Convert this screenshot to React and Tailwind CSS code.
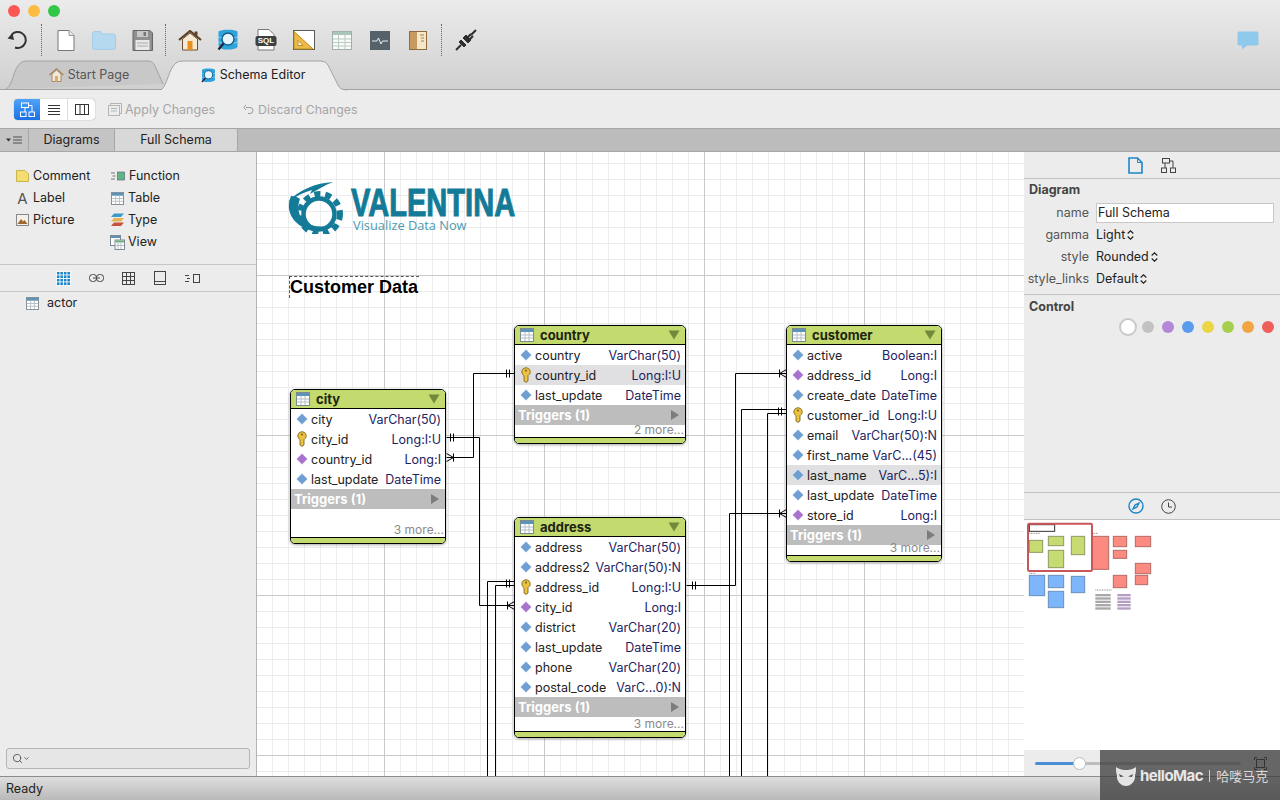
import { Search, ChevronDown } from 'lucide-react';

const nodes = [
  {
    name: 'city',
    pos: 'left-[33px] top-[237px] w-[156px]',
    moreH: 'h-[28px]',
    more: '3 more...',
    rows: [
      ['city', 'VarChar(50)', 'd'],
      ['city_id', 'Long:I:U', 'k'],
      ['country_id', 'Long:I', 'p'],
      ['last_update', 'DateTime', 'd'],
    ],
  },
  {
    name: 'country',
    pos: 'left-[257px] top-[173px] w-[172px]',
    moreH: 'h-[12px]',
    more: '2 more...',
    rows: [
      ['country', 'VarChar(50)', 'd'],
      ['country_id', 'Long:I:U', 'k', true],
      ['last_update', 'DateTime', 'd'],
    ],
  },
  {
    name: 'address',
    pos: 'left-[257px] top-[365px] w-[172px]',
    moreH: 'h-[14px]',
    more: '3 more...',
    rows: [
      ['address', 'VarChar(50)', 'd'],
      ['address2', 'VarChar(50):N', 'd'],
      ['address_id', 'Long:I:U', 'k'],
      ['city_id', 'Long:I', 'p'],
      ['district', 'VarChar(20)', 'd'],
      ['last_update', 'DateTime', 'd'],
      ['phone', 'VarChar(20)', 'd'],
      ['postal_code', 'VarC...0):N', 'd'],
    ],
  },
  {
    name: 'customer',
    pos: 'left-[529px] top-[173px] w-[156px]',
    moreH: 'h-[10px]',
    more: '3 more...',
    rows: [
      ['active', 'Boolean:I', 'd'],
      ['address_id', 'Long:I', 'p'],
      ['create_date', 'DateTime', 'd'],
      ['customer_id', 'Long:I:U', 'k'],
      ['email', 'VarChar(50):N', 'd'],
      ['first_name', 'VarC...(45)', 'd'],
      ['last_name', 'VarC...5):I', 'd', true],
      ['last_update', 'DateTime', 'd'],
      ['store_id', 'Long:I', 'p'],
    ],
  },
];

function TableIcon({ size = 14, head = '#5f93b5' }) {
  return (
    <svg width={size} height={size} viewBox="0 0 14 14" className="shrink-0">
      <rect x="0.5" y="0.5" width="13" height="13" fill="#fff" stroke="#7c8a94" />
      <rect x="1" y="1" width="12" height="3" fill={head} />
      <path d="M5 4v9M9 4v9M1 7h12M1 10h12" stroke="#b4bec6" strokeWidth="1" />
    </svg>
  );
}

function Diamond({ color }) {
  return (
    <svg width="12" height="12" viewBox="0 0 12 12" className="shrink-0">
      <path d="M6 0.5 11.500 6 6 11.500 0.5 6Z" fill={color} stroke="#fff" strokeOpacity="0.5" strokeWidth="0.5" />
    </svg>
  );
}

function KeyIcon() {
  return (
    <svg width="10" height="16" viewBox="0 0 10 16" className="shrink-0">
      <path d="M5 0.7a4.2 4.2 0 0 1 2 7.9V14l-2 1.4L3 14V8.6A4.2 4.2 0 0 1 5 0.7Z" fill="#eec23f" stroke="#7b6a28" strokeWidth="0.9" />
      <circle cx="5" cy="3.6" r="1.1" fill="#7b6a28" />
    </svg>
  );
}

function TableNode({ node }) {
  return (
    <div className={`absolute ${node.pos} bg-white border border-black rounded-[5px] overflow-hidden shadow-[0_1px_3px_rgba(0,0,0,0.35)]`}>
      <div className="h-[19px] bg-[#c3da6e] border-b border-black flex items-center pl-[5px] pr-[5px]">
        <TableIcon />
        <span className="ml-[6px] pt-[1px] font-bold text-[13px] text-[#1e2410]">{node.name}</span>
        <svg width="12" height="10" viewBox="0 0 12 10" className="ml-auto">
          <path d="M0.5 0.5h11L6 9.5Z" fill="#73893a" />
        </svg>
      </div>
      {node.rows.map((r) => (
        <div key={r[0]} className={`h-5 flex items-center pr-[4px] text-[12.5px] ${r[3] ? 'bg-[#e0e0e2]' : ''}`}>
          <span className="w-[20px] flex justify-center pl-[1px] shrink-0">
            {r[2] === 'k' ? <KeyIcon /> : <Diamond color={r[2] === 'p' ? '#a873cc' : '#6d9fd2'} />}
          </span>
          <span className="text-[#222] pt-[2px]">{r[0]}</span>
          <span className="ml-auto pt-[2px] text-[#23235f] whitespace-nowrap">{r[1]}</span>
        </div>
      ))}
      <div className="h-5 bg-[#bdbdbd] flex items-center px-[3px] pr-[6px]">
        <span className="text-white font-bold text-[13px] pt-[1px]">Triggers (1)</span>
        <svg width="8" height="10" viewBox="0 0 8 10" className="ml-auto">
          <path d="M0 0l8 5-8 5Z" fill="#7d7d7d" />
        </svg>
      </div>
      <div className={`${node.moreH} flex items-end justify-end pr-[1px] text-[12px] leading-[14px] text-[#8a8a8a]`}>{node.more}</div>
      <div className="h-[5px] bg-[#c3da6e] border-t border-black box-content"></div>
    </div>
  );
}

function Ticks({ x, y }) {
  return <path d={`M${x} ${y - 4}v8M${x + 3} ${y - 4}v8`} />;
}

function Crow({ x, y, dir }) {
  // dir 1: table on right, -1: table on left
  return <path d={`M${x} ${y - 4}v8M${x} ${y}L${x + 7 * dir} ${y - 4}M${x} ${y}L${x + 7 * dir} ${y + 4}`} />;
}

function Links() {
  return (
    <svg className="absolute left-0 top-0" width="767" height="624" fill="none" stroke="#000" strokeWidth="1">
      <g transform="translate(-256.5 -151.5)">
        <path d="M514 373H473V457H446" />
        <path d="M446 437H479V605H514" />
        <path d="M514 581H487V776" />
        <path d="M514 585H495V776" />
        <path d="M686 585H735V373H786" />
        <path d="M786 409H741V776" />
        <path d="M786 413H767V776" />
        <path d="M786 513H729V776" />
        <Ticks x={506} y={373} />
        <Ticks x={450} y={437} />
        <Ticks x={506} y={583} />
        <Ticks x={692} y={585} />
        <Ticks x={778} y={411} />
        <Crow x={453} y={457} dir={-1} />
        <Crow x={507} y={605} dir={1} />
        <Crow x={779} y={373} dir={1} />
        <Crow x={779} y={513} dir={1} />
      </g>
    </svg>
  );
}

function Logo() {
  const teal = '#137b97';
  return (
    <div className="absolute left-[31px] top-[30px] w-[240px] h-[54px]">
      <svg className="absolute left-0 top-0" width="60" height="52" viewBox="0 0 60 52">
        <circle cx="32" cy="32" r="20" fill="none" stroke={teal} strokeWidth="6" strokeDasharray="6 5" />
        <circle cx="31" cy="32" r="15.500" fill="none" stroke={teal} strokeWidth="4.500" />
        <path d="M45 0C28 1 10 8 0 20 8 14 16 10 24 8L22 12 38 3C40 2 43 1 45 0Z" fill={teal} />
        <path d="M3 14C-3 28 3 44 28 50 14 42 7 30 12 17 10 15 6 14 3 14Z" fill={teal} />
        <path d="M14 40C24 50 38 50 50 42 38 46 24 45 14 40Z" fill={teal} />
      </svg>
      <div className="absolute left-[63px] top-[8px] origin-left scale-x-[0.765] font-['Liberation_Sans',sans-serif] font-bold text-[38px] leading-[26px] [-webkit-text-stroke:1px_#137b97] text-[#137b97] whitespace-nowrap">VALENTINA</div>
      <div className="absolute left-[65px] top-[35px] font-['Open_Sans',sans-serif] text-[12.8px] leading-[16px] text-[#4b9ab2] whitespace-nowrap">Visualize Data Now</div>
    </div>
  );
}

function Canvas() {
  return (
    <div className="relative flex-1 overflow-hidden bg-white bg-[linear-gradient(#c9c9c9_1px,transparent_1px),linear-gradient(90deg,#c9c9c9_1px,transparent_1px),linear-gradient(#ececec_1px,transparent_1px),linear-gradient(90deg,#ececec_1px,transparent_1px)] bg-[size:160px_160px,160px_160px,16px_16px,16px_16px] bg-[position:0_123px,127px_0,0_11px,15px_0]">
      <Logo />
      <div className="absolute left-[32px] top-[124px] w-[130px] h-[22px] border-t border-l border-dashed border-[#555] font-['Liberation_Sans',sans-serif] font-bold text-[18px] leading-[21px] text-black whitespace-nowrap">Customer Data</div>
      <Links />
      {nodes.map((n) => <TableNode key={n.name} node={n} />)}
    </div>
  );
}

function Dots() {
  return <div className="h-[32px] w-0 border-l border-dotted border-[#666] shrink-0"></div>;
}

function ToolBox({ children }) {
  return <div className="w-[38px] h-[38px] flex items-center justify-center shrink-0">{children}</div>;
}

function SchemaIcon({ size }) {
  return (
    <svg width={size} height={size} viewBox="0 0 22 22">
      <path d="M1.500 2.500C4 0 18 0 20.500 2.500V18C18 21 8 21 5 20L1.500 17Z" fill="#2ea3dd" />
      <path d="M1.500 8C6 10 16 10 20.500 8M1.500 13C6 15 16 15 20.500 13" fill="none" stroke="#a8dcf4" strokeWidth="0.800" />
      <circle cx="11" cy="10" r="6" fill="#e6f5fb" stroke="#145f88" strokeWidth="1.400" />
      <path d="M6.500 14.500 1.500 20.500" stroke="#223" strokeWidth="2.200" />
    </svg>
  );
}

function Toolbar() {
  return (
    <div className="h-[40px] flex items-center">
      <div className="w-9 flex justify-center">
        <svg width="22" height="22" viewBox="0 0 22 22" fill="none" stroke="#333" strokeWidth="2">
          <path d="M4.500 6A8 8 0 1 1 8 18.500" />
          <path d="M0.500 9.500 7 11 5.500 4Z" fill="#333" stroke="none" />
        </svg>
      </div>
      <div className="ml-[5px]"><Dots /></div>
      <div className="ml-[5px] flex">
        <ToolBox>
          <svg width="18" height="21" viewBox="0 0 18 21">
            <path d="M1 .5h11l5 5v15H1Z" fill="#fff" stroke="#777" />
            <path d="M12 .5v5h5" fill="#e8e8e8" stroke="#999" />
          </svg>
        </ToolBox>
        <ToolBox>
          <svg width="24" height="19" viewBox="0 0 24 19">
            <path d="M0.500 2.500a2 2 0 0 1 2-2h6l2 2.500h11a2 2 0 0 1 2 2v11.500a2 2 0 0 1-2 2h-19a2 2 0 0 1-2-2Z" fill="#b5d9ef" stroke="#a5cce6" />
          </svg>
        </ToolBox>
        <ToolBox>
          <svg width="21" height="21" viewBox="0 0 21 21">
            <path d="M1 .5h17l2.500 2.500v17.500h-19.500Z" fill="#8f8f8f" stroke="#666" />
            <rect x="5" y="1" width="11" height="6" fill="#c8c8c8" />
            <rect x="11.500" y="2" width="2.500" height="4" fill="#777" />
            <rect x="3.500" y="10" width="14" height="10" fill="#e8e8e8" />
            <path d="M5 13h11M5 16h11" stroke="#aaa" />
          </svg>
        </ToolBox>
      </div>
      <div className="ml-[4px]"><Dots /></div>
      <div className="ml-[5px] flex">
        <ToolBox>
          <svg width="24" height="21" viewBox="0 0 24 21">
            <path d="M4.500 9v11h15V9L12 3Z" fill="#f5ead6" stroke="#6b4f33" />
            <path d="M1 10 12 1l11 9" fill="none" stroke="#5c4128" strokeWidth="2.200" />
            <rect x="16.500" y="1.500" width="3" height="4" fill="#5c4128" />
            <rect x="9.500" y="11" width="5" height="9" fill="#e88f1e" />
          </svg>
        </ToolBox>
        <ToolBox>
          <SchemaIcon size={22} />
        </ToolBox>
        <ToolBox>
          <svg width="22" height="22" viewBox="0 0 22 22">
            <path d="M3 .5h11l5 5v15.500H3Z" fill="#fff" stroke="#777" />
            <rect x="0.500" y="7" width="21" height="10" rx="2" fill="#3f3f3f" />
          </svg>
          <span className="absolute text-[8px] font-bold leading-none text-white font-['Liberation_Sans',sans-serif] mt-[2px]">SQL</span>
        </ToolBox>
        <ToolBox>
          <svg width="22" height="20" viewBox="0 0 22 20">
            <rect x="0.500" y="0.500" width="21" height="19" fill="#fff" stroke="#5a5a5a" />
            <path d="M1 1.500V19h19Z" fill="#edbb45" stroke="#b98b24" />
            <path d="M5 10.500V15.500h5Z" fill="#fff" stroke="#b98b24" />
          </svg>
        </ToolBox>
        <ToolBox>
          <svg width="20" height="19" viewBox="0 0 20 19">
            <rect x="0.500" y="0.500" width="19" height="18" fill="#f8fbf8" stroke="#9fb1a8" />
            <rect x="1" y="1" width="18" height="3" fill="#a9c5bc" />
            <path d="M6.500 4v14M13 4v14M1 8h18M1 11.500h18M1 15h18" stroke="#b9cbc3" />
          </svg>
        </ToolBox>
        <ToolBox>
          <svg width="20" height="19" viewBox="0 0 20 19">
            <rect width="20" height="19" fill="#55626a" />
            <path d="M2 10h5l1.500-3 2.500 6 1.500-3h5.500" fill="none" stroke="#e8eef0" strokeWidth="1" />
          </svg>
        </ToolBox>
        <ToolBox>
          <svg width="18" height="19" viewBox="0 0 18 19">
            <rect x="0.500" y="0.500" width="17" height="18" fill="#f7e7c9" stroke="#8f6c3f" />
            <rect x="1" y="1" width="7" height="17" fill="#c79a63" />
            <path d="M11 4h4M12 7h3M12 10h3" stroke="#a4814f" />
          </svg>
        </ToolBox>
      </div>
      <div className="ml-[4px]"><Dots /></div>
      <div className="ml-[5px]">
        <ToolBox>
          <svg width="22" height="22" viewBox="0 0 22 22" fill="none" stroke="#2e2e2e">
            <path d="M1 21 6 16" strokeWidth="2" />
            <path d="M5 12 10 17 8 19 3 14Z" fill="#2e2e2e" transform="translate(1 -1)" />
            <path d="M8 9 13 14 16 11 11 6Z" fill="#2e2e2e" />
            <path d="M13 8 16 5M15 10 18 7M16 6 21 1" strokeWidth="2" />
          </svg>
        </ToolBox>
      </div>
      <div className="ml-auto mr-[21px]">
        <svg width="22" height="19" viewBox="0 0 22 19">
          <path d="M2 .500h18a1.500 1.500 0 0 1 1.500 1.500v11a1.500 1.500 0 0 1-1.500 1.500H10L5 18.500v-4H2A1.500 1.500 0 0 1 .5 13V2A1.500 1.500 0 0 1 2 .5Z" fill="#8fc9ec" />
        </svg>
      </div>
    </div>
  );
}

function Tabs() {
  return (
    <div className="relative h-[30px] flex border-b border-[#a3a3a3]">
      <div className="relative ml-[5px] w-[160px] h-[30px] flex items-center justify-center">
        <svg className="absolute left-0 top-0" width="160" height="30" viewBox="0 0 160 30">
          <path d="M1 29C8 26 8 8 16 2.500Q18 1 22 1H143Q148 1 150 6L158 24" fill="#c8c8c8" stroke="#a3a3a3" />
        </svg>
        <span className="relative flex items-center gap-[4px] text-[#555] text-[12.5px] ml-[8px]">
          <svg width="15" height="14" viewBox="0 0 15 14">
            <path d="M3 6v7.500h9V6L7.500 2Z" fill="#f3e9d8" stroke="#a58a6c" />
            <path d="M.5 7 7.500 1l7 6" fill="none" stroke="#a58a6c" strokeWidth="1.400" />
            <rect x="6" y="8" width="3" height="5.500" fill="#e3a766" />
          </svg>
          Start Page
        </span>
      </div>
      <div className="relative ml-[-4px] w-[186px] h-[31px] flex items-center justify-center z-10">
        <svg className="absolute left-0 top-0" width="186" height="31" viewBox="0 0 186 31">
          <path d="M0 30C6 26 8 8 15 3Q17 1 22 1H160Q165 1 167 5L176 23C178 28 180 29.500 186 30V31H0Z" fill="#ececec" />
          <path d="M0 30C6 26 8 8 15 3Q17 1 22 1H160Q165 1 167 5L176 23C178 28 180 29.500 186 30" fill="none" stroke="#a3a3a3" />
        </svg>
        <span className="relative flex items-center gap-[4px] text-[#222] text-[12.5px] mr-[2px]">
          <SchemaIcon size={15} />
          Schema Editor
        </span>
      </div>
    </div>
  );
}

function SubToolbar() {
  return (
    <div className="h-[38px] bg-[#ececec] flex items-center pl-[14px] text-[12.5px] text-[#a6a6a6]">
      <div className="flex h-[21px] w-[81px] rounded-[4px] bg-white shadow-[0_0_1px_rgba(0,0,0,0.5)] overflow-hidden">
        <div className="w-[26px] bg-[linear-gradient(#4ea4f8,#1b70e4)] flex items-center justify-center">
          <svg width="15" height="15" viewBox="0 0 15 15" fill="none" stroke="#fff">
            <rect x="1.500" y="1" width="7" height="4.500" />
            <rect x="0.500" y="10" width="5.500" height="4.500" />
            <rect x="9" y="10" width="5.500" height="4.500" />
            <path d="M5 5.500V10M8.500 3.500H12V10" />
          </svg>
        </div>
        <div className="w-[28px] border-r border-[#ddd] flex items-center justify-center">
          <svg width="14" height="11" viewBox="0 0 14 11" stroke="#333"><path d="M1 1.500h12M1 4.500h12M1 7.500h12M1 10.500h12" /></svg>
        </div>
        <div className="flex-1 flex items-center justify-center">
          <svg width="14" height="11" viewBox="0 0 14 11" fill="none" stroke="#333"><rect x="0.500" y="0.500" width="13" height="10" /><path d="M5 .5v10M9.500 .5v10" /></svg>
        </div>
      </div>
      <svg width="14" height="13" viewBox="0 0 14 13" fill="none" stroke="#b5b5b5" className="ml-[13px]">
        <rect x="2.500" y="0.500" width="11" height="10" />
        <rect x="0.500" y="2.500" width="11" height="10" fill="#ececec" />
        <path d="M3 5.500h6M3 8h6" />
      </svg>
      <span className="ml-[3px] pt-[2px]">Apply Changes</span>
      <svg width="11" height="11" viewBox="0 0 11 11" fill="none" stroke="#9a9a9a" className="ml-[28px]">
        <path d="M3 3.500h4a3 3 0 0 1 0 6H5M3 1 .8 3.500 3 6" />
      </svg>
      <span className="ml-[4px] pt-[2px] text-[12.3px]">Discard Changes</span>
    </div>
  );
}

function TabStrip() {
  return (
    <div className="h-[24px] bg-[#bcbcbc] border-y border-[#a6a6a6] flex text-[12.5px] text-[#222]">
      <div className="w-[29px] bg-[#c4c4c4] border-r border-[#a6a6a6] flex items-center justify-center">
        <svg width="16" height="8" viewBox="0 0 16 8" fill="#333">
          <path d="M0 2.500h5L2.500 5.500Z" />
          <path d="M7 1h9M7 4h9M7 7h9" stroke="#333" strokeWidth="0.800" />
        </svg>
      </div>
      <div className="w-[86px] bg-[#c4c4c4] border-r border-[#a6a6a6] flex items-center justify-center">Diagrams</div>
      <div className="w-[123px] bg-[#d8d8d8] border-r border-[#a6a6a6] flex items-center justify-center">Full Schema</div>
    </div>
  );
}

function Palette() {
  const itemCls = 'flex items-center gap-[4px] h-[22px]';
  return (
    <div className="h-[113px] pt-[13px] pl-[16px] flex border-b border-[#c6c6c6] text-[12.5px] text-[#222]">
      <div className="w-[95px]">
        <div className={itemCls}>
          <svg width="13" height="12" viewBox="0 0 13 12"><path d="M.5 .5h8.500l3.500 3.500v7.500H.5Z" fill="#f5de70" stroke="#c9b44f" /></svg>
          Comment
        </div>
        <div className={itemCls}>
          <span className="w-[13px] text-center text-[15px] text-[#555] leading-none">A</span>
          Label
        </div>
        <div className={itemCls}>
          <svg width="13" height="12" viewBox="0 0 13 12">
            <rect x="0.500" y="0.500" width="12" height="11" fill="#f4f0e8" stroke="#888" />
            <path d="M1.500 10 5 5l2 2.500L8.500 6l3 4Z" fill="#9a6a2e" />
          </svg>
          Picture
        </div>
      </div>
      <div>
        <div className={itemCls}>
          <svg width="14" height="10" viewBox="0 0 14 10">
            <path d="M0 2h4M1.500 5h3M0 8h4" stroke="#777" />
            <rect x="6.500" y="1" width="7" height="8" fill="#61b583" stroke="#557" strokeWidth="0.600" />
          </svg>
          Function
        </div>
        <div className={itemCls}>
          <TableIcon size={13} />
          Table
        </div>
        <div className={itemCls}>
          <svg width="13" height="14" viewBox="0 0 13 14">
            <path d="M3 .5h10L10 4H0Z" fill="#3b9bc8" />
            <path d="M3 5h10L10 8.500H0Z" fill="#e4b453" />
            <path d="M3 9.500h10L10 13H0Z" fill="#c8503f" />
          </svg>
          Type
        </div>
        <div className={itemCls}>
          <svg width="15" height="15" viewBox="0 0 15 15" className="ml-[-1px] mr-[-1px]">
            <rect x="0.500" y="0.500" width="10" height="10" fill="#fff" stroke="#7c8a94" />
            <rect x="1" y="1" width="9" height="2" fill="#5f93b5" />
            <rect x="5" y="5" width="9.500" height="9.500" fill="#fff" stroke="#7c8a94" />
            <rect x="5.500" y="5.500" width="8.500" height="2" fill="#6fae7e" />
            <path d="M8 8v6M11 8v6M6 10.500h8" stroke="#b4bec6" />
          </svg>
          View
        </div>
      </div>
    </div>
  );
}

function Sidebar() {
  return (
    <aside className="w-[257px] shrink-0 bg-[#ececec] border-r border-[#b5b5b5] flex flex-col">
      <Palette />
      <div className="h-[27px] border-b border-[#c6c6c6] flex items-center pl-[56px]">
        <div className="w-[15px] h-[15px] bg-[#1f86c7] bg-[linear-gradient(#fff_1px,transparent_1px),linear-gradient(90deg,#fff_1px,transparent_1px)] bg-[size:3.500px_3.500px]"></div>
        <svg width="15" height="8" viewBox="0 0 15 8" fill="none" stroke="#444" className="ml-[18px]">
          <rect x="0.500" y="0.500" width="7" height="7" rx="3" />
          <rect x="7.500" y="0.500" width="7" height="7" rx="3" />
          <path d="M4 4h7" />
        </svg>
        <svg width="13" height="13" viewBox="0 0 13 13" fill="none" stroke="#444" className="ml-[18px]">
          <rect x="0.500" y="0.500" width="12" height="12" />
          <path d="M4.500 0v13M8.500 0v13M0 4.500h13M0 8.500h13" />
        </svg>
        <svg width="12" height="14" viewBox="0 0 12 14" fill="none" stroke="#444" className="ml-[19px]">
          <rect x="0.500" y="0.500" width="11" height="13" />
          <path d="M0 10.500h12" />
        </svg>
        <svg width="15" height="9" viewBox="0 0 15 9" fill="none" stroke="#444" className="ml-[19px]">
          <path d="M0 1.500h4M2 4.500h3M0 7.500h4" />
          <rect x="8.500" y="0.500" width="6" height="8" />
        </svg>
      </div>
      <div className="h-[22px] flex items-center pl-[26px] gap-[8px] text-[12.5px] text-[#222]">
        <TableIcon size={13} />
        <span className="pt-[1px]">actor</span>
      </div>
      <div className="mt-auto mb-[7px] mx-[6px] h-[21px] border border-[#b5b5b5] rounded-[3px] bg-[#e6e6e6] flex items-center pl-[5px] text-[#555]">
        <Search size={11} strokeWidth={2} />
        <ChevronDown size={7} strokeWidth={3} />
      </div>
    </aside>
  );
}

const swatches = ['bg-[#c2c2c2]', 'bg-[#b587d8]', 'bg-[#5a9bec]', 'bg-[#ecd544]', 'bg-[#a6cf4f]', 'bg-[#f0a443]', 'bg-[#ef5f5a]'];

function UpDown() {
  return (
    <svg width="7" height="10" viewBox="0 0 7 10" fill="none" stroke="#222" strokeWidth="1.200" className="ml-[2px]">
      <path d="M.7 3.500 3.500 .8 6.300 3.500M.7 6.500 3.500 9.200 6.300 6.500" />
    </svg>
  );
}

function PropRow({ label, value }) {
  return (
    <div className="h-[22px] flex items-center">
      <span className="w-[65px] text-right text-[#555] whitespace-nowrap">{label}</span>
      <span className="ml-[7px] text-[#222] flex items-center">{value}<UpDown /></span>
    </div>
  );
}

const mini = {
  green: [[28, 151, 68, 187], [85, 139, 131, 167], [154, 139, 194, 194], [85, 181, 131, 233]],
  red: [[217, 139, 266, 238], [280, 139, 320, 170], [280, 181, 320, 205], [346, 139, 392, 170], [346, 220, 392, 251], [280, 256, 320, 293], [346, 256, 383, 284]],
  blue: [[28, 256, 74, 317], [85, 256, 131, 293], [154, 259, 194, 308], [85, 304, 131, 353]],
};
const miniColor = { green: ['#c6dc72', '#8e9a63'], red: ['#fb8a80', '#b56a66'], blue: ['#7db6fb', '#6b8fbd'] };

function MiniMap() {
  // coordinates read at 3x, so everything sits in a 3x viewBox
  return (
    <svg className="flex-1 min-h-0 w-full" viewBox="12 90 768 690" preserveAspectRatio="xMinYMin meet">
      {Object.entries(mini).map(([k, list]) =>
        list.map((r) => (
          <rect key={r.join()} x={r[0]} y={r[1]} width={r[2] - r[0]} height={r[3] - r[1]} fill={miniColor[k][0]} stroke={miniColor[k][1]} strokeWidth="3" />
        )),
      )}
      {[312, 322, 332, 342, 352].map((y) => (
        <g key={y}>
          <rect x="226" y={y} width="46" height="7" fill="#a8a8a8" />
          <rect x="292" y={y} width="40" height="7" fill="#b59ec4" />
        </g>
      ))}
      <path d="M226 300h50M28 130h32M28 250h20M218 130h16" stroke="#555" strokeWidth="2" strokeDasharray="3 2" />
      <rect x="28" y="104" width="76" height="20" fill="#fff" stroke="#333" strokeWidth="3" />
      <rect x="24" y="101" width="192" height="142" rx="4" fill="none" stroke="#c9575a" strokeWidth="6" />
    </svg>
  );
}

function Inspector() {
  return (
    <aside className="w-[256px] shrink-0 bg-[#ececec] flex flex-col text-[12.5px]">
      <div className="h-[27px] border-b border-[#c2c2c2] flex items-center justify-center gap-[18px]">
        <svg width="15" height="17" viewBox="0 0 15 17" fill="none" stroke="#1f86c7" strokeWidth="1.600">
          <path d="M1 1h8.500L14 5.500V16H1Z" />
          <path d="M9.500 1v4.500H14" strokeWidth="1" />
        </svg>
        <svg width="15" height="15" viewBox="0 0 15 15" fill="none" stroke="#444">
          <rect x="1.500" y="0.500" width="7" height="4.500" />
          <rect x="0.500" y="10" width="5" height="4.500" />
          <rect x="9.500" y="10" width="5" height="4.500" />
          <path d="M4 5v5M8.500 3H12v7" />
        </svg>
      </div>
      <div className="h-[116px] border-b border-[#c2c2c2] px-[5px] pt-[1px]">
        <div className="font-bold text-[#444] h-[20px] leading-[20px]">Diagram</div>
        <div className="h-[22px] mt-[2px] flex items-center">
          <span className="w-[60px] text-right text-[#555]">name</span>
          <div className="ml-[7px] w-[178px] h-[20px] bg-white border border-[#c8c8c8] pl-[1px] leading-[18px] text-[#222]">Full Schema</div>
        </div>
        <div className="ml-[-5px]">
          <PropRow label="gamma" value="Light" />
          <PropRow label="style" value="Rounded" />
          <PropRow label="style_links" value="Default" />
        </div>
      </div>
      <div className="h-[198px] border-b border-[#c2c2c2] px-[5px] pt-[2px]">
        <div className="font-bold text-[#444] h-[20px] leading-[20px]">Control</div>
        <div className="flex items-center justify-end gap-[8px] mt-[1px] pr-[1px]">
          <span className="w-[18px] h-[18px] rounded-full bg-white border-[2px] border-[#c9c9c9] mr-[-3px] shadow-[inset_0_0_0_1px_#fff]"></span>
          {swatches.map((c) => <span key={c} className={`w-[12px] h-[12px] rounded-full ${c}`}></span>)}
        </div>
      </div>
      <div className="h-[27px] border-b border-[#c2c2c2] flex items-center justify-center gap-[17px]">
        <svg width="16" height="16" viewBox="0 0 16 16" fill="none" stroke="#1f86c7" strokeWidth="1.400">
          <circle cx="8" cy="8" r="7" />
          <path d="M11 5 9 9 5 11 7 7Z" />
        </svg>
        <svg width="15" height="15" viewBox="0 0 15 15" fill="none" stroke="#444">
          <circle cx="7.500" cy="7.500" r="6.800" />
          <path d="M7.500 3.500v4.500h3.500" />
        </svg>
      </div>
      <div className="flex-1 min-h-0 bg-white flex">
        <MiniMap />
      </div>
      <div className="relative h-[26px] flex items-center pl-[11px]">
        <div className="h-[3px] w-[44px] bg-[#4a8fd6] rounded-l-full"></div>
        <div className="h-[3px] w-[162px] bg-[#bdbdbd] rounded-r-full"></div>
        <div className="absolute left-[49px] w-[13px] h-[13px] rounded-full bg-white border border-[#bbb]"></div>
        <svg width="13" height="13" viewBox="0 0 13 13" fill="none" stroke="#222" className="absolute right-[13px]">
          <path d="M.5 3V.5H3M10 .5h2.500V3M12.500 10v2.500H10M3 12.500H.5V10" />
          <rect x="2.500" y="2.500" width="8" height="8" />
        </svg>
      </div>
    </aside>
  );
}

function Watermark() {
  return (
    <div className="absolute right-0 bottom-0 w-[180px] h-[50px] bg-[#3a3a3a]/75 flex items-center pl-[16px] pt-[2px] text-white">
      <svg width="20" height="20" viewBox="0 0 20 20" fill="#e4e4e4">
        <path d="M0 1C3 3 5 4 10 4S17 3 20 1C20 5 20 7 19 9 20 15 15 20 10 20S0 15 1 9C0 7 0 5 0 1Z" />
        <path d="M3 8 8 10.500 4 11ZM17 8 12 10.500 16 11Z" fill="#555" />
      </svg>
      <span className="ml-[4px] font-bold text-[15px] tracking-[-0.5px] text-[#e8e8e8] font-['Inter',sans-serif]">helloMac</span>
      <span className="ml-[6px] w-px h-[12px] bg-[#cfcfcf]"></span>
      <span className="ml-[6px] text-[13px] text-[#d8d8d8] font-['Noto_Sans_CJK_SC',sans-serif]">哈喽马克</span>
    </div>
  );
}

export default function App() {
  return (
    <div className="relative w-[1280px] h-[800px] overflow-hidden flex flex-col font-['Inter',sans-serif] text-[12.5px] bg-[#ececec]">
      <div className="h-[90px] shrink-0 bg-[linear-gradient(#ebebeb,#d0d0d0)] flex flex-col">
        <div className="h-[20px] pt-[5px] pl-[8px] flex gap-[8px]">
          <span className="w-[12px] h-[12px] rounded-full bg-[#fc5753]"></span>
          <span className="w-[12px] h-[12px] rounded-full bg-[#fdbc40]"></span>
          <span className="w-[12px] h-[12px] rounded-full bg-[#33c748]"></span>
        </div>
        <Toolbar />
        <Tabs />
      </div>
      <SubToolbar />
      <TabStrip />
      <div className="flex-1 min-h-0 flex">
        <Sidebar />
        <Canvas />
        <Inspector />
      </div>
      <div className="h-[24px] shrink-0 border-t border-[#8c8c8c] bg-[linear-gradient(#dedede,#b9b9b9)] flex items-center pl-[6px] pt-[1px] text-[#222]">Ready</div>
      <Watermark />
    </div>
  );
}
